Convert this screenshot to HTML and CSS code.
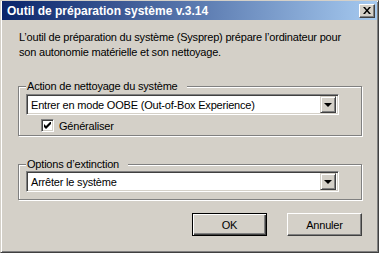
FILE: index.html
```html
<!DOCTYPE html>
<html lang="fr">
<head>
  <meta charset="UTF-8">
  <title>Outil de préparation système v.3.14</title>
  <link rel="stylesheet" href="styles.css">
</head>
<body>
  <div class="window">
    <div class="titlebar">
      <span class="title">Outil de préparation système v.3.14</span>
      <button class="close" title="Fermer">
        <svg width="8" height="7" viewBox="0 0 8 7">
          <path d="M0 0h2l2 2.5L6 0h2L5 3.5 8 7H6L4 4.5 2 7H0l3-3.5z" fill="#000"/>
        </svg>
      </button>
    </div>

    <div class="content">
      <p class="intro">L’outil de préparation du système (Sysprep) prépare l’ordinateur pour<br>son autonomie matérielle et son nettoyage.</p>

      <fieldset class="group group-action">
        <legend>Action de nettoyage du système</legend>
        <div class="combo">
          <span class="combo-text">Entrer en mode OOBE (Out-of-Box Experience)</span>
          <span class="combo-arrow"><span class="arrow"></span></span>
        </div>
        <label class="check">
          <span class="check-box">
            <svg width="7" height="7" viewBox="0 0 7 7">
              <path d="M0 2v3l2 2 5-5V-1L2 4z" fill="#000"/>
            </svg>
          </span>
          Généraliser
        </label>
      </fieldset>

      <fieldset class="group group-shutdown">
        <legend>Options d’extinction</legend>
        <div class="combo">
          <span class="combo-text">Arrêter le système</span>
          <span class="combo-arrow"><span class="arrow"></span></span>
        </div>
      </fieldset>

      <div class="buttons">
        <button class="btn btn-default">OK</button>
        <button class="btn">Annuler</button>
      </div>
    </div>
  </div>
</body>
</html>
```

FILE: styles.css
```css
* {
  box-sizing: border-box;
  margin: 0;
  padding: 0;
}
body {
  font-family: "Liberation Sans", Arial, sans-serif;
  font-size: 11px;
  letter-spacing: -0.2px;
  color: #000;
  background: #d4d0c8;
}
.window {
  width: 379px;
  height: 253px;
  background: #d4d0c8;
  border: 1px solid;
  border-color: #d4d0c8 #404040 #404040 #d4d0c8;
  box-shadow: inset 1px 1px #fff, inset -1px -1px #808080;
  display: flex;
  flex-direction: column;
}

/* Title bar */
.titlebar {
  height: 19px;
  margin: 0 1px;
  background: linear-gradient(to right, #0a246a, #a6caf0);
  display: flex;
  align-items: center;
  justify-content: space-between;
  padding: 0 2px 0 5px;
}
.title {
  color: #fff;
  font-weight: bold;
  font-size: 12px;
  letter-spacing: 0;
}
.close {
  width: 16px;
  height: 14px;
  background: #d4d0c8;
  border: 1px solid;
  border-color: #fff #404040 #404040 #fff;
  box-shadow: inset -1px -1px #808080;
  display: flex;
  align-items: center;
  justify-content: center;
}

/* Dialog content */
.content {
  flex: 1;
  padding: 10px 15px 0 17px;
  display: flex;
  flex-direction: column;
}
.intro {
  line-height: 15px;
  padding-left: 1px;
}
.group {
  border: 1px solid #808080;
  box-shadow: 1px 1px #fff, inset 1px 1px #fff;
  padding: 0 22px 0 7px;
  margin-right: 1px;
}
.group legend {
  margin-left: 0;
  padding: 0 9px 0 1px;
  line-height: 13px;
  background: #d4d0c8;
}
.group-action {
  margin-top: 20px;
  height: 56px;
}
.group-shutdown {
  margin-top: 22px;
  height: 42px;
}
.group-shutdown .combo {
  margin-top: 0;
}

/* Combo box */
.combo {
  height: 21px;
  margin-top: 1px;
  background: #fff;
  border: 1px solid;
  border-color: #808080 #fff #fff #808080;
  box-shadow: inset 1px 1px #404040, inset -1px -1px #d4d0c8;
  display: flex;
  align-items: center;
  padding: 2px;
}
.combo-text {
  flex: 1;
  padding-left: 2px;
  padding-top: 1px;
}
.combo-arrow {
  width: 16px;
  height: 17px;
  background: #d4d0c8;
  border: 1px solid;
  border-color: #d4d0c8 #404040 #404040 #d4d0c8;
  box-shadow: inset 1px 1px #fff, inset -1px -1px #808080;
  display: flex;
  align-items: center;
  justify-content: center;
}
.arrow {
  width: 0;
  height: 0;
  border-left: 4px solid transparent;
  border-right: 4px solid transparent;
  border-top: 4px solid #000;
  margin-top: 1px;
}

/* Checkbox */
.check {
  display: flex;
  align-items: center;
  gap: 5px;
  margin-top: 4px;
  margin-left: 15px;
}
.check-box {
  width: 13px;
  height: 13px;
  background: #fff;
  border: 1px solid;
  border-color: #808080 #fff #fff #808080;
  box-shadow: inset 1px 1px #404040, inset -1px -1px #d4d0c8;
  display: flex;
  align-items: center;
  justify-content: center;
}

/* Buttons */
.buttons {
  display: flex;
  justify-content: flex-end;
  gap: 20px;
  margin-top: 13px;
  padding-right: 1px;
}
.btn {
  width: 75px;
  height: 23px;
  font-family: inherit;
  font-size: 11px;
  letter-spacing: -0.2px;
  background: #d4d0c8;
  border: 1px solid;
  border-color: #fff #404040 #404040 #fff;
  box-shadow: inset -1px -1px #808080;
}
.btn-default {
  border: 1px solid #000;
  box-shadow: inset 1px 1px #fff, inset -1px -1px #404040, inset -2px -2px #808080;
}
```
